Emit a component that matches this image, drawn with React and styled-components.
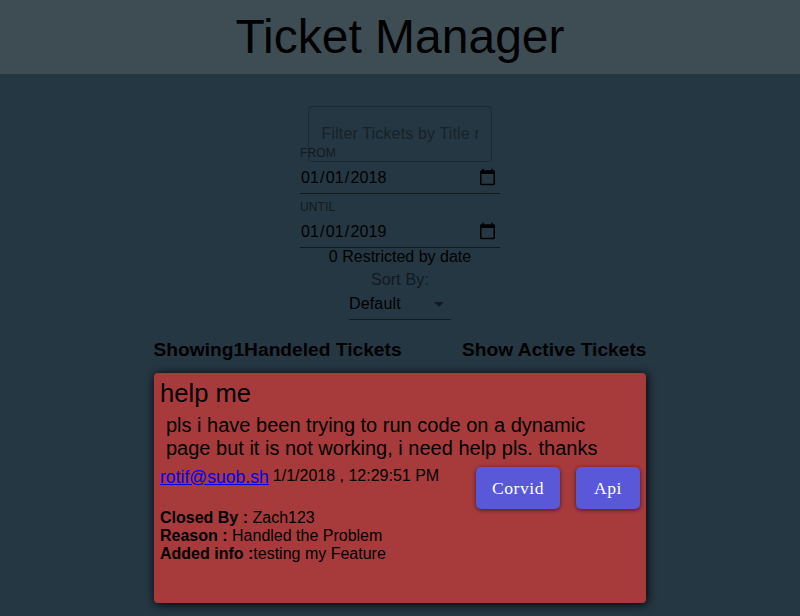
import React from "react";
import styled, { createGlobalStyle } from "styled-components";

const Global = createGlobalStyle`
  *{box-sizing:border-box}
  body{margin:0;background:#253743;font-family:"Liberation Sans",Arial,sans-serif;color:#000;font-size:16px;overflow:hidden}
`;
const Page = styled.main`
  height:616px;display:flex;flex-direction:column;align-items:center;background:#253743;overflow:hidden;
`;
const Header = styled.header`width:100%;height:74px;flex:none;background:#3e4d53;text-align:center;`;
const Title = styled.h1`margin:0;font-size:48px;font-weight:400;line-height:74px;`;
const Filters = styled.section`
  width:200px;margin-top:32px;display:flex;flex-direction:column;align-items:center;flex:none;
`;
const Search = styled.input`
  width:184px;height:56px;padding:0 13px;border:1px solid #1c2a33;border-radius:4px;background:transparent;
  font:16px "Liberation Sans",Arial,sans-serif;letter-spacing:.15px;text-indent:-.5px;
  &::placeholder{color:#172228;opacity:1}
`;
const Dates = styled.div`display:flex;flex-direction:column;gap:6px;margin-top:-16px;`;
const DateField = styled.label`width:200px;height:48px;display:flex;flex-direction:column;flex:none;`;
const DateLabel = styled.span`font-size:12px;line-height:14px;letter-spacing:.11px;color:#111a20;`;
const DateInput = styled.input`
  width:200px;height:34px;border:0;border-bottom:1px solid #111a20;background:transparent;padding:2px 0 0;
  font:16px "Liberation Sans",Arial,sans-serif;letter-spacing:.15px;color:#000;
  &::-webkit-calendar-picker-indicator{width:19px;height:19px;padding:1px 3px 2px 2px;box-sizing:content-box}
`;
const Restricted = styled.div`line-height:18px;`;
const SortLabel = styled.div`line-height:18px;margin-top:5px;letter-spacing:.15px;color:#111a20;`;
const Select = styled.div`
  width:102px;height:31px;border-bottom:1px solid #111a20;letter-spacing:.15px;
  display:flex;align-items:center;justify-content:space-between;
`;
const Arrow = styled.svg`width:24px;height:24px;fill:#111a20;`;
const Heading = styled.div`
  width:493px;display:flex;justify-content:space-between;font-size:19.2px;font-weight:700;line-height:22px;margin-top:19px;
`;
const Card = styled.article`
  width:492px;height:230px;flex:none;margin-top:12px;background:#a73b3c;border-radius:4px;padding:6px;
  box-shadow:1px 1px 10px #000;
`;
const CardTitle = styled.h2`margin:0;font-size:25.6px;line-height:29px;font-weight:400;`;
const Content = styled.p`margin:6px 6px 0;font-size:20px;line-height:23px;`;
const Meta = styled.div`display:flex;justify-content:space-between;margin-top:7px;`;
const Contact = styled.div`display:flex;gap:4px;align-items:flex-start;`;
const Mail = styled.a`font-size:17.6px;line-height:20px;color:#0000f5;text-decoration:underline;`;
const Time = styled.span`line-height:18px;`;
const Tags = styled.div`display:flex;gap:16px;`;
const Tag = styled.button`
  width:${p => p.$width}px;height:42px;border:0;border-radius:5px;background:#5858d9;color:#fff;
  font:17.6px "Liberation Serif",serif;letter-spacing:.5px;padding:0;
  box-shadow:0 1px 4px rgba(0,0,0,.6);
`;
const Details = styled.div`line-height:18px;`;

export default function App() {
  return <><Global/><Page>
    <Header><Title>Ticket Manager</Title></Header>
    <Filters>
      <Search placeholder="Filter Tickets by Title name"/>
      <Dates>
        <DateField><DateLabel>FROM</DateLabel><DateInput type="date" defaultValue="2018-01-01"/></DateField>
        <DateField><DateLabel>UNTIL</DateLabel><DateInput type="date" defaultValue="2019-01-01"/></DateField>
      </Dates>
      <Restricted>0 Restricted by date</Restricted>
      <SortLabel>Sort By:</SortLabel>
      <Select>Default<Arrow viewBox="0 0 24 24"><path d="M7 10l5 5 5-5z"/></Arrow></Select>
    </Filters>
    <Heading><span>Showing1Handeled Tickets</span><span>Show Active Tickets</span></Heading>
    <Card>
      <CardTitle>help me</CardTitle>
      <Content>pls i have been trying to run code on a dynamic page but it is not working, i need help pls. thanks</Content>
      <Meta>
        <Contact><Mail href="mailto:rotif@suob.sh">rotif@suob.sh</Mail><Time>1/1/2018 , 12:29:51 PM</Time></Contact>
        <Tags><Tag $width={84}>Corvid</Tag><Tag $width={64}>Api</Tag></Tags>
      </Meta>
      <Details><b>Closed By :</b> Zach123<br/><b>Reason :</b> Handled the Problem<br/><b>Added info :</b>testing my Feature</Details>
    </Card>
  </Page></>;
}
